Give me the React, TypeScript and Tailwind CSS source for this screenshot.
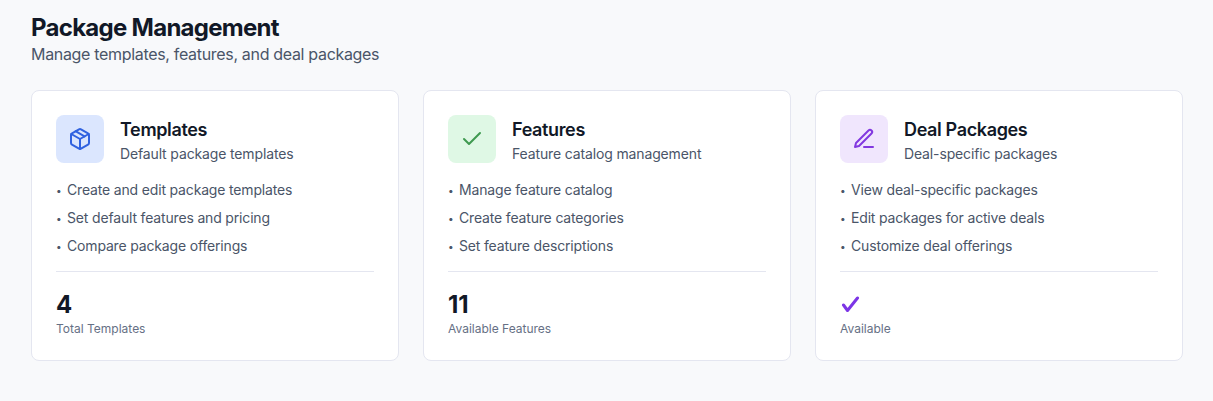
import React from "react";
import { Check } from "lucide-react";

const PackageIcon = ({ className }: { className?: string }) => (
  <svg viewBox="0 0 24 24" fill="none" stroke="currentColor" strokeWidth={2} strokeLinecap="round" strokeLinejoin="round" className={className}>
    <path d="M16.5 9.4 7.55 4.24" />
    <path d="M21 16V8a2 2 0 0 0-1-1.73l-7-4a2 2 0 0 0-2 0l-7 4A2 2 0 0 0 3 8v8a2 2 0 0 0 1 1.73l7 4a2 2 0 0 0 2 0l7-4A2 2 0 0 0 21 16z" />
    <polyline points="3.29 7 12 12 20.71 7" />
    <line x1="12" y1="22" x2="12" y2="12" />
  </svg>
);

const PenIcon = ({ className }: { className?: string }) => (
  <svg viewBox="0 0 24 24" fill="none" stroke="currentColor" strokeWidth={2} strokeLinecap="round" strokeLinejoin="round" className={className}>
    <path d="M12 20h9" />
    <path d="M16.5 3.5a2.12 2.12 0 0 1 3 3L7 19l-4 1 1-4Z" />
  </svg>
);

const cards = [
  {
    title: "Templates",
    subtitle: "Default package templates",
    Icon: PackageIcon,
    tile: "bg-[#dbe6fe]",
    iconColor: "text-[#3062e0]",
    items: ["Create and edit package templates", "Set default features and pricing", "Compare package offerings"],
    stat: "4",
    label: "Total Templates",
  },
  {
    title: "Features",
    subtitle: "Feature catalog management",
    Icon: Check,
    tile: "bg-[#dff8e5]",
    iconColor: "text-[#3f9a50]",
    items: ["Manage feature catalog", "Create feature categories", "Set feature descriptions"],
    stat: "11",
    label: "Available Features",
  },
  {
    title: "Deal Packages",
    subtitle: "Deal-specific packages",
    Icon: PenIcon,
    tile: "bg-[#f0e6fd]",
    iconColor: "text-[#8238e0]",
    items: ["View deal-specific packages", "Edit packages for active deals", "Customize deal offerings"],
    stat: null,
    label: "Available",
  },
];

export default function App() {
  return (
    <div className="min-h-[401px] bg-[#f8f9fb] pl-[31px] pr-[30px] pt-[12px] font-['Inter',sans-serif]">
      <h1 className="text-2xl leading-8 font-bold tracking-[-0.03em] text-[#111827]">Package Management</h1>
      <p className="text-base leading-5 tracking-[-0.02em] text-[#4a5568]">Manage templates, features, and deal packages</p>

      <div className="mt-[26px] grid grid-cols-3 gap-6">
        {cards.map((card) => (
          <div key={card.title} className="h-[271px] rounded-lg border border-[#e4e6f0] bg-white px-6 pt-6">
            <div className="flex items-center gap-4">
              <div className={`flex h-12 w-12 items-center justify-center rounded-lg ${card.tile}`}>
                <card.Icon className={`h-6 w-6 ${card.iconColor}`} />
              </div>
              <div className="h-12 pt-px">
                <div className="text-lg leading-7 font-semibold tracking-[-0.02em] text-[#111827]">{card.title}</div>
                <div className="text-sm leading-5 tracking-[-0.01em] text-[#4a5568]">{card.subtitle}</div>
              </div>
            </div>

            <ul className="mt-[17px] flex flex-col gap-2 text-sm leading-5 tracking-[-0.012em] text-[#4a5568]">
              {card.items.map((item) => (
                <li key={item} className="flex items-center">
                  <span className="w-[11px] text-[10px]">•</span>
                  {item}
                </li>
              ))}
            </ul>

            <div className="mt-[15px] border-t border-[#e4e6f0] pt-[17px]">
              {card.stat ? (
                <div className="text-2xl leading-8 font-bold text-[#111827]">{card.stat}</div>
              ) : (
                <div className="flex h-8 items-center">
                  <svg viewBox="0 0 20 18" className="h-[18px] w-5 text-[#7c35e6]" fill="none" stroke="currentColor" strokeWidth={3} strokeLinecap="round" strokeLinejoin="round">
                    <path d="M3.5 9 L7.5 14.5 L17.5 2" />
                  </svg>
                </div>
              )}
              <div className="text-xs leading-4 text-[#667085]">{card.label}</div>
            </div>
          </div>
        ))}
      </div>
    </div>
  );
}
